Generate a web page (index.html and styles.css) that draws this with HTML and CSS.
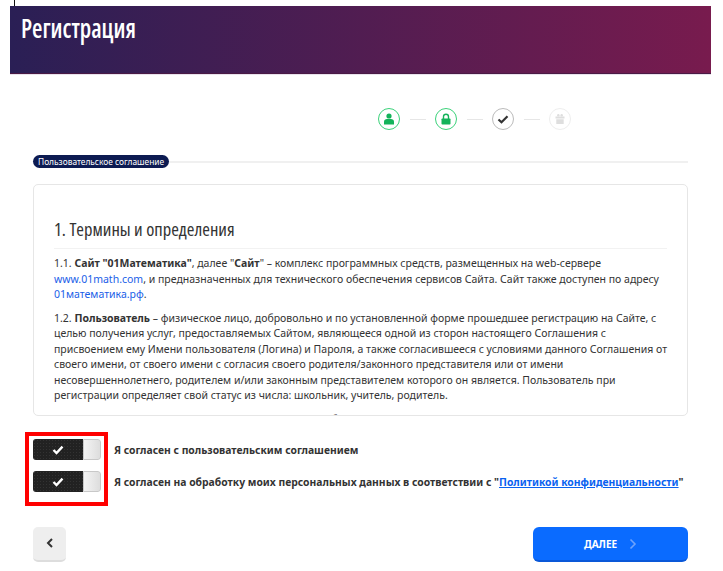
FILE: index.html
```html
<!DOCTYPE html>
<html lang="en">
<head>
    <meta charset="UTF-8">
    <title>Регистрация</title>
    <link rel="stylesheet" href="styles.css">
</head>
<body>
    <div class="corner-mark"></div>
    <div class="page-header">
        <h1>Регистрация</h1>
    </div>

    <div class="steps">
        <div class="step step-done">
            <svg viewBox="0 0 12 12" width="12" height="12"><circle cx="6" cy="3" r="2.6" fill="#13b35a"/><path d="M1 11.5V8.6C1 7 2.4 6 4 6h4c1.6 0 3 1 3 2.600v2.900z" fill="#13b35a"/></svg>
        </div>
        <div class="step-line"></div>
        <div class="step step-done">
            <svg viewBox="0 0 12 12" width="12" height="12"><path d="M3.500 6V3.800a2.500 2.500 0 0 1 5 0V6" fill="none" stroke="#13b35a" stroke-width="1.400"/><rect x="1.500" y="5.500" width="9" height="6" rx="0.800" fill="#13b35a"/></svg>
        </div>
        <div class="step-line"></div>
        <div class="step step-current">
            <svg viewBox="0 0 12 12" width="12" height="12"><path d="M1.500 6.500l3 2.800 6-6" fill="none" stroke="#333" stroke-width="2.200"/></svg>
        </div>
        <div class="step-line"></div>
        <div class="step step-todo">
            <svg viewBox="0 0 12 12" width="12" height="12"><path d="M1.500 3.500h9v2h-9zM2.300 6.300h7.400v4.700H2.300z" fill="#dedede"/><circle cx="4.300" cy="2.300" r="1.200" fill="#dedede"/><circle cx="7.700" cy="2.300" r="1.200" fill="#dedede"/></svg>
        </div>
    </div>

    <div class="section-title">
        <span class="section-badge">Пользовательское соглашение</span>
        <div class="section-rule"></div>
    </div>

    <div class="terms">
        <h2>1. Термины и определения</h2>
        <p>1.1. <b>Сайт "01Математика"</b>, далее "<b>Сайт</b>" – комплекс программных средств, размещенных на web-сервере<br><a href="#">www.01math.com</a>, и предназначенных для технического обеспечения сервисов Сайта. Сайт также доступен по адресу<br><a href="#">01математика.рф</a>.</p>
        <p>1.2. <b>Пользователь</b> – физическое лицо, добровольно и по установленной форме прошедшее регистрацию на Сайте, с<br>целью получения услуг, предоставляемых Сайтом, являющееся одной из сторон настоящего Соглашения с<br>присвоением ему Имени пользователя (Логина) и Пароля, а также согласившееся с условиями данного Соглашения от<br>своего имени, от своего имени с согласия своего родителя/законного представителя или от имени<br>несовершеннолетнего, родителем и/или законным представителем которого он является. Пользователь при<br>регистрации определяет свой статус из числа: школьник, учитель, родитель.</p>
        <p>1.3. <b>Имя пользователя (Логин)</b> – уникальное имя, выбранное Пользователем при регистрации (логин) на сайте и</p>
    </div>

    <div class="agreements">
        <div class="agree-row">
            <div class="toggle">
                <div class="toggle-on"><svg viewBox="0 0 12 10" width="12" height="10"><path d="M1.500 5l3 3 6-6.300" fill="none" stroke="#fff" stroke-width="2.400"/></svg></div>
                <div class="toggle-knob"></div>
            </div>
            <span>Я согласен с пользовательским соглашением</span>
        </div>
        <div class="agree-row">
            <div class="toggle">
                <div class="toggle-on"><svg viewBox="0 0 12 10" width="12" height="10"><path d="M1.500 5l3 3 6-6.300" fill="none" stroke="#fff" stroke-width="2.400"/></svg></div>
                <div class="toggle-knob"></div>
            </div>
            <span>Я согласен на обработку моих персональных данных в соответствии с "<a href="#">Политикой конфиденциальности</a>"</span>
        </div>
        <div class="highlight"></div>
    </div>

    <div class="nav-buttons">
        <button class="btn-back"><svg viewBox="0 0 8 10" width="8" height="10"><path d="M6 1L2 5l4 4" fill="none" stroke="#333" stroke-width="2"/></svg></button>
        <button class="btn-next">ДАЛЕЕ <svg viewBox="0 0 8 12" width="8" height="12"><path d="M1.500 1.500L6 6l-4.500 4.500" fill="none" stroke="#6fa3fb" stroke-width="1.600"/></svg></button>
    </div>
</body>
</html>
```

FILE: styles.css
```css
body {
    font-family: "Noto Sans", sans-serif;
    margin: 0;
    padding: 6px 0 0 10px;
    background-color: #fff;
    color: #333;
    position: relative;
    height: 571px;
    box-sizing: border-box;
    overflow: hidden;
}

.corner-mark {
    position: absolute;
    left: 14px;
    top: 0;
    width: 1px;
    height: 6px;
    background-color: #111;
}

.page-header {
    height: 68px;
    margin-right: 12px;
    padding: 6px 0 0 11px;
    box-sizing: border-box;
    background: linear-gradient(90deg, #2a1f55, #781b4e);
    border-bottom: 1px solid #4a1a45;
    box-shadow: 0 1px 0 #e8e2ec;
}

.page-header h1 {
    display: inline-block;
    margin: 0;
    font-family: "Open Sans", sans-serif;
    font-stretch: 75%;
    font-size: 27px;
    line-height: 32px;
    font-weight: 600;
    color: #fff;
    transform: scaleX(0.885);
    transform-origin: left;
}

.steps {
    display: flex;
    align-items: center;
    margin: 34px 0 0 368px;
}

.step {
    width: 22px;
    height: 22px;
    box-sizing: border-box;
    border-radius: 50%;
    border: 1.5px solid #ccc;
    display: flex;
    align-items: center;
    justify-content: center;
}

.step-done {
    border-color: #3bd27a;
}

.step-current {
    border-color: #bbb;
}

.step-todo {
    border-color: #eee;
}

.step-line {
    width: 16px;
    height: 1px;
    margin: 0 9.500px;
    background-color: #e6e6e6;
}

.section-title {
    display: flex;
    align-items: center;
    margin: 25px 35px 0 23px;
}

.section-badge {
    background-color: #0d1b52;
    color: #fff;
    font-size: 8.400px;
    line-height: 13px;
    padding: 0 5px;
    border-radius: 7px;
    white-space: nowrap;
}

.section-rule {
    flex: 1;
    height: 2px;
    background-color: #f0f0f0;
}

.terms {
    margin: 16px 35px 0 23px;
    height: 232px;
    padding: 0 20px;
    box-sizing: border-box;
    border: 1px solid #e6e6e6;
    border-radius: 5px;
    overflow: hidden;
}

.terms h2 {
    margin: 32px 0 0;
    padding-bottom: 7px;
    font-family: "Open Sans", sans-serif;
    font-stretch: 75%;
    font-size: 18.500px;
    line-height: 24px;
    font-weight: 400;
    color: #333;
    border-bottom: 1px solid #f2f2f2;
}

.terms p {
    margin: 7px 0 0;
    font-size: 10.500px;
    line-height: 15.500px;
    white-space: nowrap;
}

.terms p + p {
    margin-top: 8px;
}

.terms a {
    color: #1a5ee8;
    text-decoration: none;
}

.agreements {
    position: relative;
    margin: 23px 0 0 23px;
}

.agree-row {
    display: flex;
    align-items: center;
    height: 21px;
    margin-bottom: 11px;
    font-size: 10.350px;
    font-weight: 700;
    white-space: nowrap;
}

.agree-row a {
    color: #0a62f0;
}

.toggle {
    display: flex;
    width: 68px;
    height: 21px;
    margin-right: 13px;
    flex-shrink: 0;
    border-radius: 3px;
    overflow: hidden;
}

.toggle-on {
    width: 50px;
    background-color: #222;
    background-image: radial-gradient(#333 30%, transparent 35%);
    background-size: 3px 3px;
    display: flex;
    align-items: center;
    justify-content: center;
}

.toggle-knob {
    flex: 1;
    background: linear-gradient(90deg, #f4f4f4, #ddd);
    border: 1px solid #c8c8c8;
    border-radius: 0 3px 3px 0;
}

/* red frame over the two switches */
.highlight {
    position: absolute;
    left: -8px;
    top: -7px;
    width: 75px;
    height: 66px;
    border: 4px solid #f00;
}

.nav-buttons {
    display: flex;
    justify-content: space-between;
    align-items: flex-start;
    margin: 35px 35px 0 23px;
}

.btn-back {
    width: 33px;
    height: 35px;
    background-color: #eee;
    border: none;
    border-bottom: 2px solid #ddd;
    border-radius: 5px;
}

.btn-next {
    width: 155px;
    height: 35px;
    background-color: #0a6bff;
    border: none;
    border-bottom: 2px solid #0a58d8;
    border-radius: 6px;
    color: #fff;
    font-family: "Noto Sans", sans-serif;
    font-size: 10px;
    font-weight: 700;
    display: flex;
    align-items: center;
    justify-content: center;
    gap: 12px;
}
```
